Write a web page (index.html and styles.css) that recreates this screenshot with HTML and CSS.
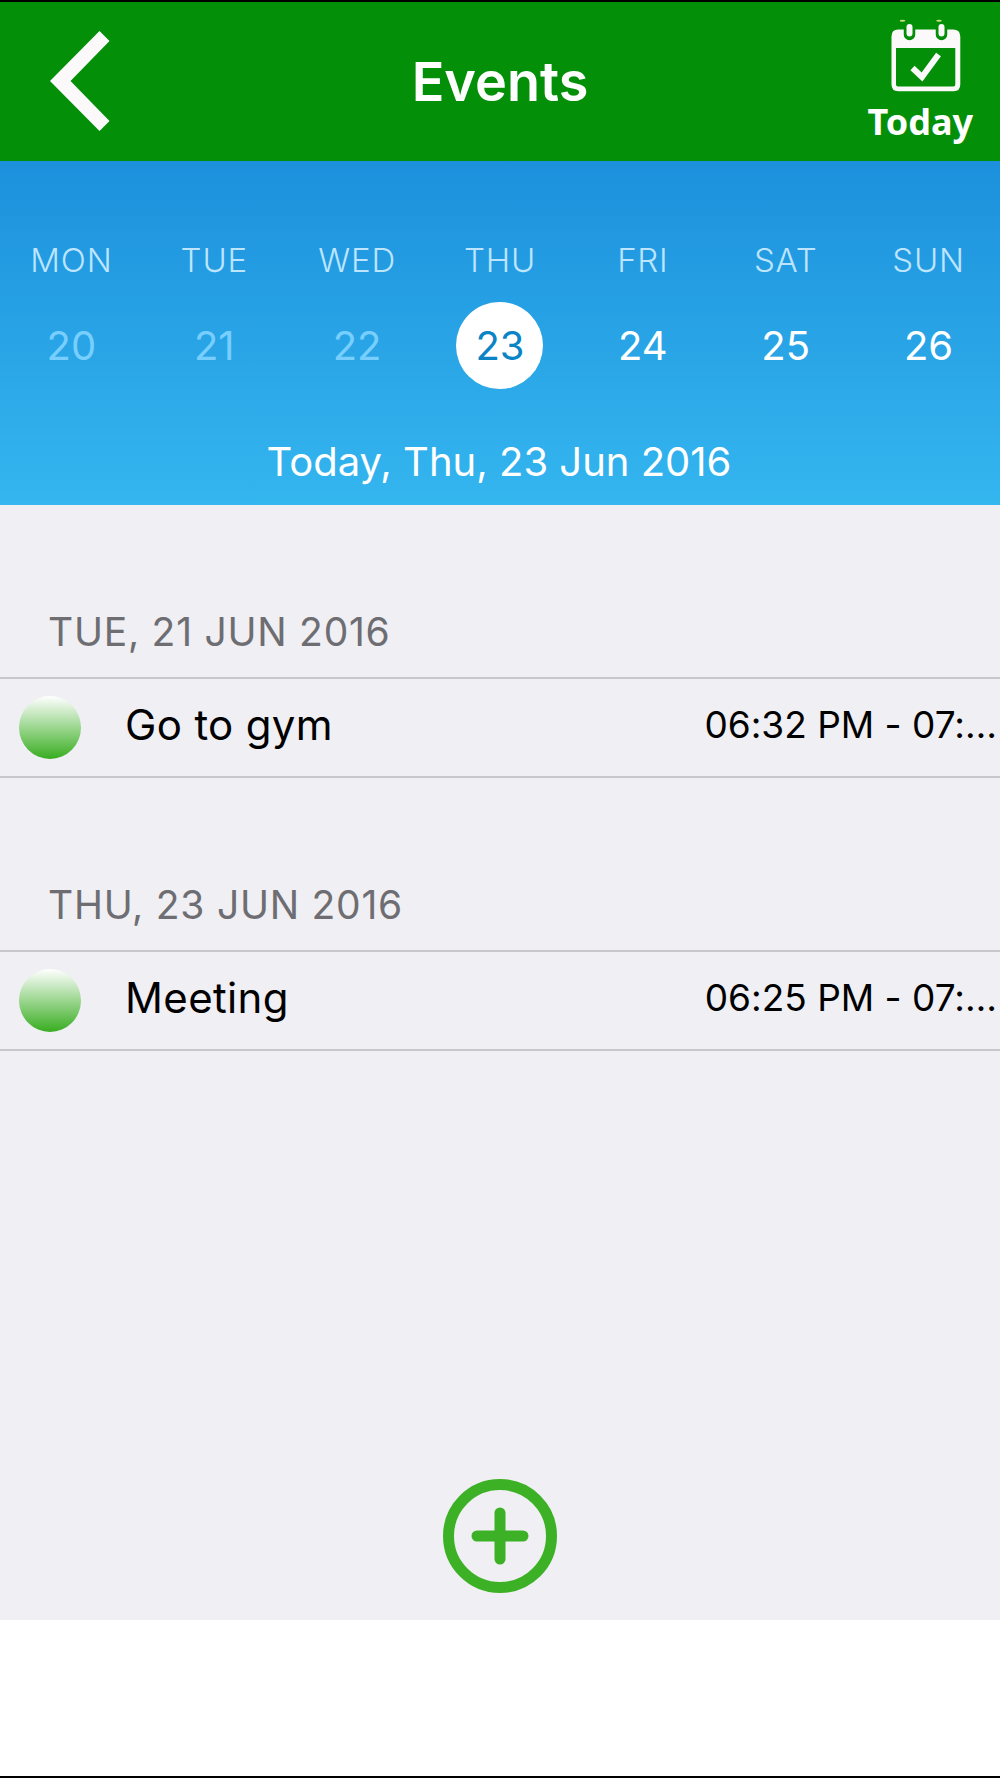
FILE: index.html
```html
<!DOCTYPE html>
<html lang="en">
<head>
    <meta charset="UTF-8">
    <meta name="viewport" content="width=device-width, initial-scale=1.0">
    <title>Events</title>
    <link rel="stylesheet" href="styles.css">
</head>
<body>

<div class="screen">
    <header class="navbar">
        <a class="back" href="#" aria-label="Back">
            <svg width="60" height="100" viewBox="0 0 60 100">
                <path d="M0 50L49.5 0L59.5 10L20.5 50L59.5 90L49.5 100Z" fill="#fbf9fa"/>
            </svg>
        </a>
        <h1>Events</h1>
        <a class="today" href="#">
            <svg width="70" height="74" viewBox="0 0 70 74">
                <ellipse cx="11.5" cy="2.8" rx="2.8" ry="1" fill="#c9dc8c"/>
                <ellipse cx="48" cy="2.8" rx="2.8" ry="1" fill="#c9dc8c"/>
                <path fill-rule="evenodd" d="M7 11.5H62Q69.300 11.5 69.300 18.500V66.500Q69.300 73.200 62.500 73.200H7.500Q0.500 73.200 0.500 66.500V18.500Q0.500 11.5 7 11.5ZM5 30V66.500Q5 68.500 7 68.500H62.500Q64.300 68.500 64.300 66.500V30Z" fill="#fbf9fa"/>
                <path d="M18.500 9.500V16.500M50.500 9.500V16.500" stroke="#048f08" stroke-width="11.500" stroke-linecap="round"/>
                <path d="M18.500 9V15.500M50.500 9V15.500" stroke="#fbf9fa" stroke-width="6" stroke-linecap="round"/>
                <path d="M21.500 50L31 59L47.500 36.500" fill="none" stroke="#fbf9fa" stroke-width="6"/>
            </svg>
            <span>Today</span>
        </a>
    </header>

    <section class="calendar">
        <div class="week">
            <div class="day past"><span class="name">MON</span><span class="num">20</span></div>
            <div class="day past"><span class="name">TUE</span><span class="num">21</span></div>
            <div class="day past"><span class="name">WED</span><span class="num">22</span></div>
            <div class="day selected"><span class="name">THU</span><span class="num">23</span></div>
            <div class="day"><span class="name">FRI</span><span class="num">24</span></div>
            <div class="day"><span class="name">SAT</span><span class="num">25</span></div>
            <div class="day"><span class="name">SUN</span><span class="num">26</span></div>
        </div>
        <p class="current">Today, Thu, 23 Jun 2016</p>
    </section>

    <main class="events">
        <h2>TUE, 21 JUN 2016</h2>
        <div class="event">
            <span class="dot"></span>
            <span class="title">Go to gym</span>
            <span class="time">06:32 PM - 07:…</span>
        </div>
        <h2>THU, 23 JUN 2016</h2>
        <div class="event">
            <span class="dot"></span>
            <span class="title">Meeting</span>
            <span class="time">06:25 PM - 07:…</span>
        </div>
        <button class="add" aria-label="Add event">
            <svg width="114" height="114" viewBox="0 0 114 114" fill="none" stroke="#3db125" stroke-width="11">
                <circle cx="57" cy="57" r="51.5"/>
                <path d="M34 57H80M57 34V80" stroke-linecap="round"/>
            </svg>
        </button>
    </main>
</div>

</body>
</html>
```
FILE: styles.css
```css
* {
    box-sizing: border-box;
}
body {
    margin: 0;
    font-family: Inter, "Liberation Sans", sans-serif;
    font-feature-settings: "calt" 0;
    background-color: #fff;
    color: #000;
}
h1, h2, p {
    margin: 0;
    font-weight: 400;
}
a {
    color: inherit;
    text-decoration: none;
}
svg {
    display: block;
}
.screen {
    height: 1778px;
    border-top: 2px solid #000;
    border-bottom: 2px solid #000;
    overflow: hidden;
}
.navbar {
    display: grid;
    grid-template-columns: 200px 1fr 200px;
    height: 159px;
    background-color: #048f08;
    color: #fff;
}
.back {
    padding: 29px 0 0 50px;
}
.navbar h1 {
    text-align: center;
    font-size: 54px;
    font-weight: 600;
    line-height: 159px;
}
.today {
    display: flex;
    flex-direction: column;
    align-items: flex-end;
    padding: 16px 27px 0 0;
}
.today svg {
    margin-right: 12px;
}
.today span {
    font-family: "Noto Sans", "Open Sans", sans-serif;
    font-size: 36px;
    font-weight: 700;
    line-height: 50px;
    margin-top: 5px;
}
.calendar {
    height: 344px;
    padding-top: 80px;
    background: linear-gradient(#1c90dc, #34b6ef);
    color: #fff;
}
.week {
    display: grid;
    grid-template-columns: repeat(7, 1fr);
}
.day {
    display: flex;
    flex-direction: column;
    align-items: center;
}
.day .name {
    font-size: 33px;
    font-weight: 350;
    line-height: 38px;
    letter-spacing: 0.8px;
    color: #bde5ff;
}
.day .num {
    width: 87px;
    height: 87px;
    margin-top: 23px;
    border-radius: 50%;
    text-align: center;
    font-size: 40px;
    line-height: 88px;
}
.past .num {
    color: #78cffe;
}
.selected .num {
    background-color: #fff;
    color: #0b84c6;
}
.current {
    margin-top: 48px;
    padding-right: 2px;
    text-align: center;
    font-size: 40px;
    line-height: 50px;
}
.events {
    height: 1115px;
    display: flex;
    flex-direction: column;
    background-color: #efeff4;
}
.events h2 {
    height: 172px;
    padding: 102px 0 0 48px;
    font-size: 39px;
    line-height: 50px;
    letter-spacing: 0.75px;
    color: #6d6d72;
}
.event {
    display: flex;
    align-items: center;
    height: 101px;
    padding: 0 3px 0 19px;
    border-top: 2px solid #c8c7cc;
    border-bottom: 2px solid #c8c7cc;
    white-space: nowrap;
}
.dot {
    width: 62px;
    height: 63px;
    border-radius: 50%;
    background: linear-gradient(#fff, #38ad20);
}
.title {
    margin: -7px auto 0 44px;
    font-size: 42px;
    letter-spacing: 0.35px;
}
.time {
    margin-top: -7px;
    font-size: 37px;
}
.add {
    margin: auto auto 27px;
    padding: 0;
    border: none;
    background: none;
    cursor: pointer;
}
```
